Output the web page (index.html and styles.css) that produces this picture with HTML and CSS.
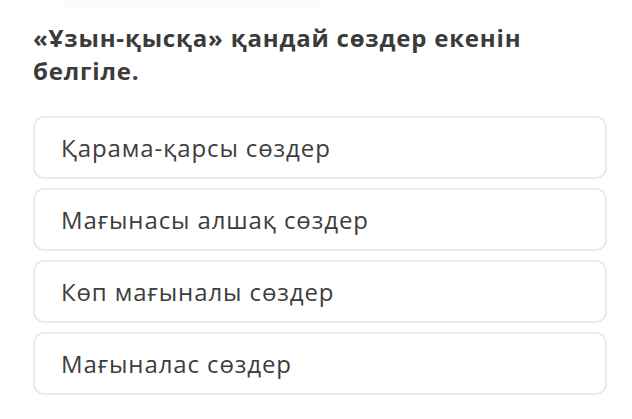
FILE: index.html
```html
<!DOCTYPE html>
<html lang="kk">
<head>
<meta charset="utf-8">
<link rel="stylesheet" href="styles.css">
</head>
<body>
<div class="topbar"></div>
<main class="quiz">
  <h1 class="question">«Ұзын-қысқа» қандай сөздер екенін белгіле.</h1>
  <div class="options">
    <div class="option">Қарама-қарсы сөздер</div>
    <div class="option">Мағынасы алшақ сөздер</div>
    <div class="option">Көп мағыналы сөздер</div>
    <div class="option">Мағыналас сөздер</div>
  </div>
</main>
</body>
</html>
```

FILE: styles.css
```css
html, body {
  margin: 0;
  padding: 0;
  background: #ffffff;
}
body {
  font-family: "Open Sans", "Noto Sans", sans-serif;
  width: 632px;
  height: 419px;
  overflow: hidden;
  position: relative;
}
.topbar {
  position: absolute;
  top: 0;
  left: 64px;
  width: 256px;
  height: 7px;
  background: #fafafa;
}
.quiz {
  padding: 21px 25px 0 33px;
}
.question {
  margin: 0;
  font-size: 24px;
  line-height: 33px;
  font-weight: 700;
  letter-spacing: 0.8px;
  color: #3b3b3b;
  width: 540px;
}
.options {
  margin-top: 29px;
  display: flex;
  flex-direction: column;
  gap: 9px;
}
.option {
  border: 2px solid #ebebeb;
  border-radius: 11px;
  padding: 13.5px 26px;
  font-size: 24px;
  line-height: 32px;
  letter-spacing: 0.9px;
  color: #3d3d3d;
}
```
